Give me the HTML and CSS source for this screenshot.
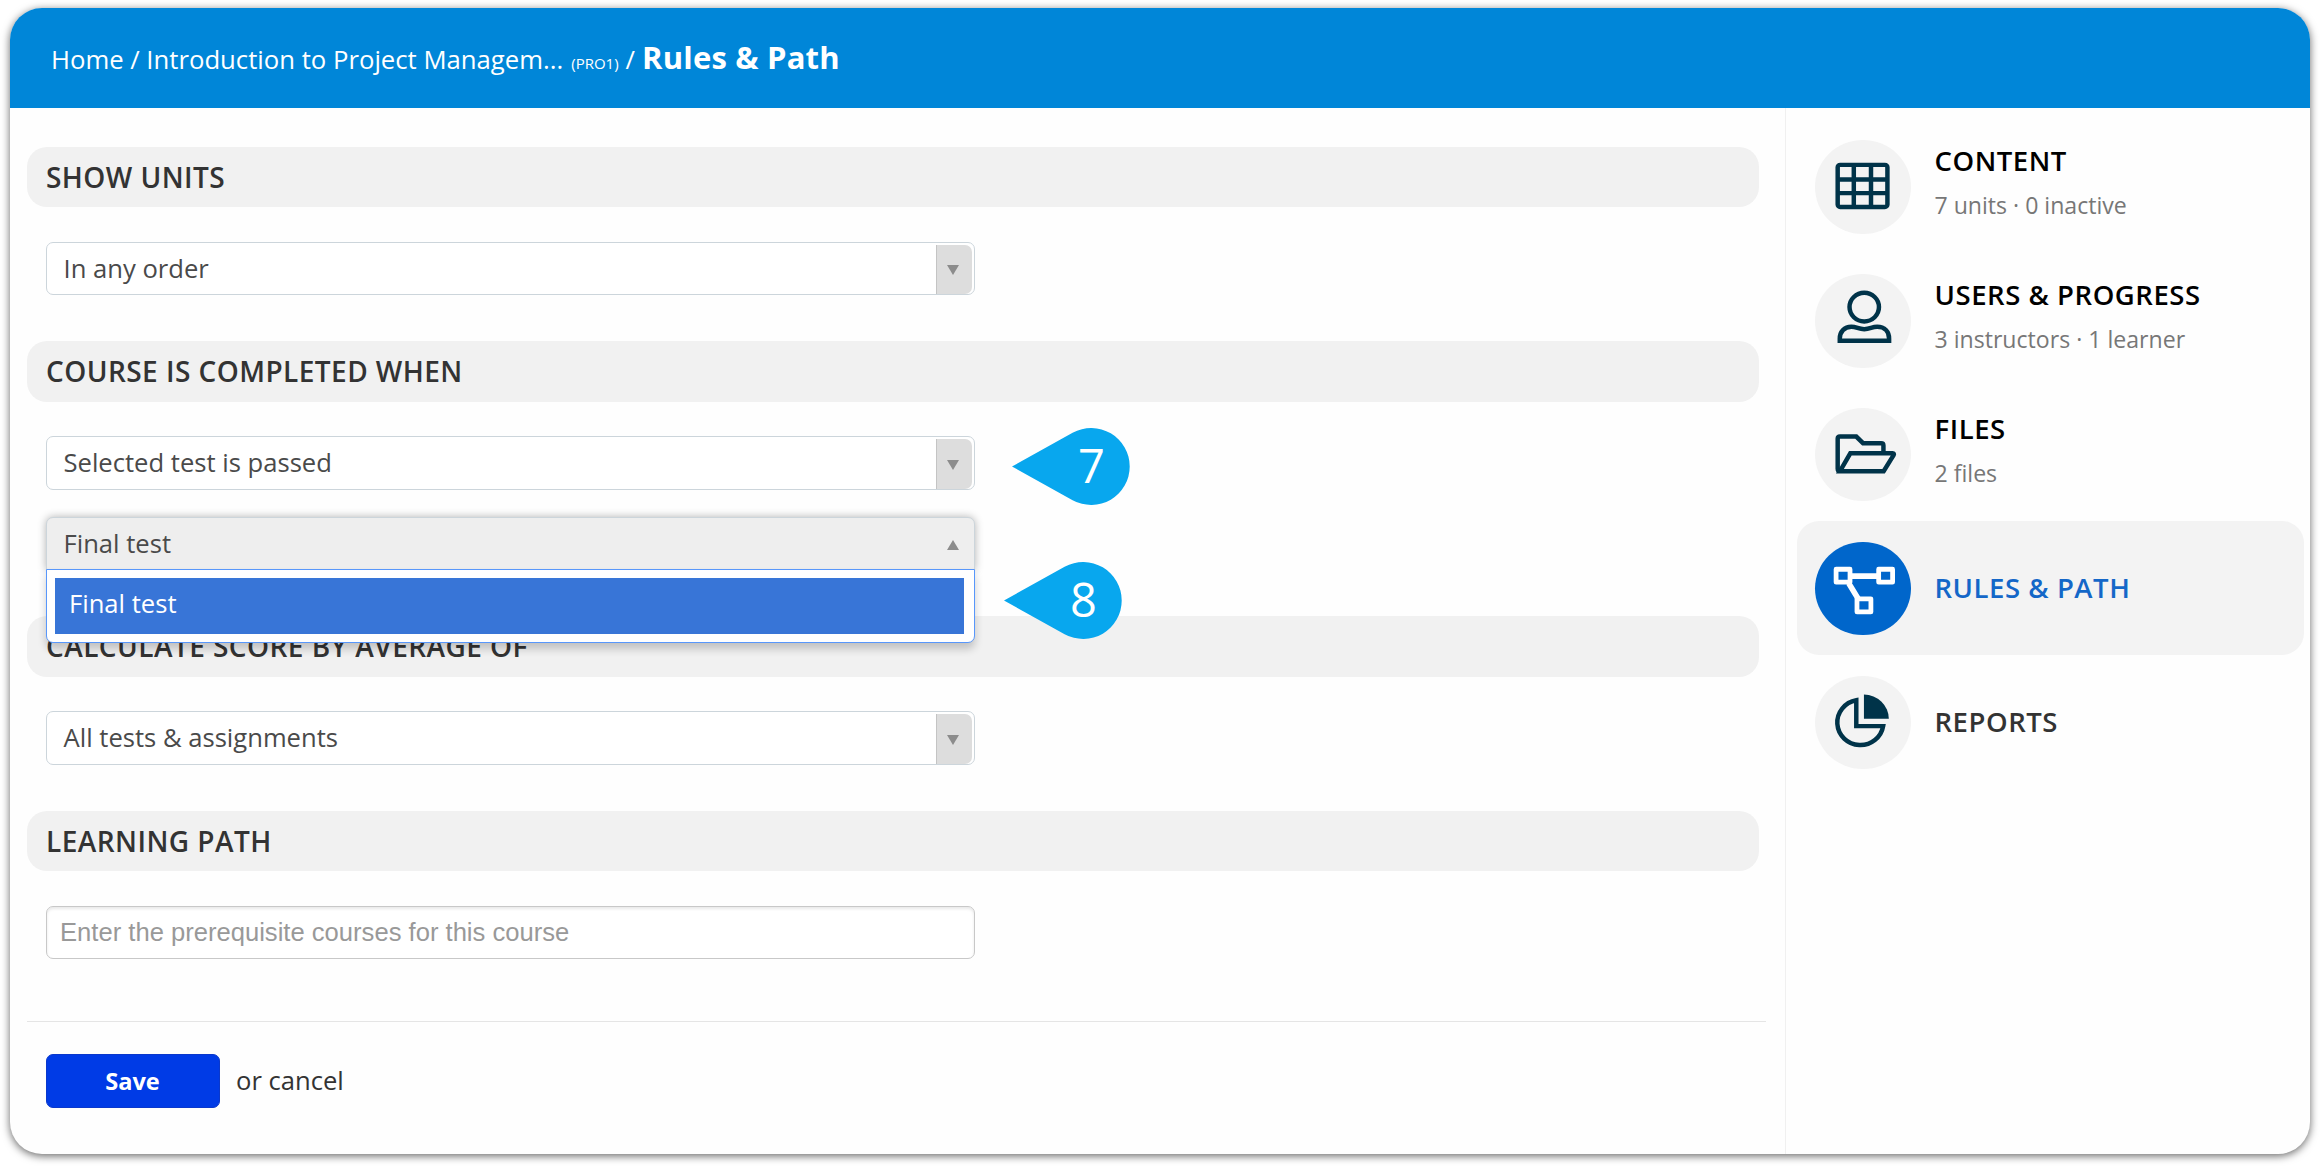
FILE: index.html
```html
<!DOCTYPE html>
<html lang="en">
<head>
    <meta charset="UTF-8">
    <meta name="viewport" content="width=device-width, initial-scale=1.0">
    <title>Rules &amp; Path</title>
    <link rel="stylesheet" href="styles.css">
</head>
<body>
    <div class="window">
        <!-- Breadcrumb -->
        <header class="topbar">
            <a class="crumb crumb-course">Home / Introduction to Project Managem...</a>
            <span class="code">(PRO1)</span>
            <span class="crumb">/</span>
            <strong class="current">Rules &amp; Path</strong>
        </header>

        <div class="main">
            <form class="rules">
                <section class="group">
                    <h2>SHOW UNITS</h2>
                    <div class="fields">
                        <div class="select"><span>In any order</span><i class="toggle"></i></div>
                    </div>
                </section>

                <section class="group">
                    <h2>COURSE IS COMPLETED WHEN</h2>
                    <div class="fields">
                        <div class="select">
                            <span>Selected test is passed</span><i class="toggle"></i>
                            <div class="marker marker-7">
                                <svg width="118" height="77" viewBox="0 0 118 77"><path d="M0 38.5 L60.6 4.8 A38.5 38.5 0 1 1 60.6 72.2 Z" fill="#08a7ee"/></svg>
                                <b>7</b>
                            </div>
                        </div>
                        <div class="select open">
                            <span>Final test</span><i class="toggle"></i>
                            <ul class="dropdown">
                                <li>Final test</li>
                            </ul>
                            <div class="marker marker-8">
                                <svg width="118" height="77" viewBox="0 0 118 77"><path d="M0 38.5 L60.6 4.8 A38.5 38.5 0 1 1 60.6 72.2 Z" fill="#08a7ee"/></svg>
                                <b>8</b>
                            </div>
                        </div>
                    </div>
                </section>

                <section class="group">
                    <h2>CALCULATE SCORE BY AVERAGE OF</h2>
                    <div class="fields">
                        <div class="select"><span>All tests &amp; assignments</span><i class="toggle"></i></div>
                    </div>
                </section>

                <section class="group">
                    <h2>LEARNING PATH</h2>
                    <div class="fields">
                        <input type="text" class="text-input" placeholder="Enter the prerequisite courses for this course">
                    </div>
                </section>

                <div class="actions">
                    <button type="button" class="save">Save</button>
                    <span class="cancel">or cancel</span>
                </div>
            </form>

            <!-- Course menu -->
            <nav class="sidebar">
                <a class="item">
                    <svg class="icon" viewBox="0 0 96 94">
                        <rect x="22.8" y="25" width="50" height="42.3" rx="2.5"/>
                        <path d="M39 25V67M56.3 25V67M22.5 39.7H72.5M22.5 53.4H72.5"/>
                    </svg>
                    <div class="label"><h3>CONTENT</h3><p>7 units · 0 inactive</p></div>
                </a>
                <a class="item">
                    <svg class="icon" viewBox="0 0 96 94">
                        <ellipse cx="49.5" cy="33.3" rx="14.8" ry="14.4"/>
                        <path d="M24.9 67V65C24.9 58 29.5 53.1 36.5 53.1C42 53.1 43.5 55.5 49.5 55.5S57 53.1 62.5 53.1C70 53.1 74.5 58 74.5 65V67Z"/>
                    </svg>
                    <div class="label"><h3>USERS &amp; PROGRESS</h3><p>3 instructors · 1 learner</p></div>
                </a>
                <a class="item">
                    <svg class="icon" viewBox="0 0 96 94">
                        <path d="M23.5 63.5Q22.8 63 22.8 61V31Q22.8 28.7 25.1 28.7H41.5L48.3 35.4H66.5Q68.8 35.4 68.8 37.6V45.5"/>
                        <path d="M25 63.6L35.5 45.6H78Q80 45.6 79 47.5L69 63.6Z"/>
                    </svg>
                    <div class="label"><h3>FILES</h3><p>2 files</p></div>
                </a>
                <a class="item active">
                    <svg class="icon" viewBox="0 0 96 94">
                        <g stroke-width="4.8" stroke-linejoin="round">
                            <rect x="21.2" y="27.4" width="14" height="13"/>
                            <rect x="64" y="27.4" width="14" height="13"/>
                            <rect x="42.2" y="57.1" width="14" height="13.2"/>
                        </g>
                        <path d="M36.4 34.3H62.4M33.9 41.5L43.4 57" stroke-width="5.6"/>
                    </svg>
                    <div class="label single"><h3>RULES &amp; PATH</h3></div>
                </a>
                <a class="item reports">
                    <svg class="icon" viewBox="0 0 96 94">
                        <path d="M41.5 24.4V50.4H68.5A23.2 22.7 0 1 1 41.5 24.4Z"/>
                        <path class="solid" d="M49.2 18.7A25 24.3 0 0 1 74.2 43H49.2Z"/>
                    </svg>
                    <div class="label single"><h3>REPORTS</h3></div>
                </a>
            </nav>
        </div>
    </div>
</body>
</html>
```
FILE: styles.css
```css
* {
    box-sizing: border-box;
}
body {
    margin: 0;
    padding: 8px 10px 12px;
    height: 1166px;
    background-color: #fff;
    font-family: "Open Sans", sans-serif;
    color: #333;
}
.window {
    height: 1146px;
    display: flex;
    flex-direction: column;
    background-color: #fefefe;
    border-radius: 32px;
    overflow: hidden;
    box-shadow: 0 2px 9px rgba(0, 0, 0, 0.6);
}
.topbar {
    height: 100px;
    flex-shrink: 0;
    display: flex;
    align-items: baseline;
    padding: 31px 42px 0 41px;
    background-color: #0086d8;
    color: #fff;
    line-height: 36px;
    white-space: nowrap;
}
.crumb {
    font-size: 25.7px;
}
.code {
    margin: 0 7px 0 8px;
    font-size: 15px;
}
.current {
    margin-left: 7px;
    font-size: 31px;
    letter-spacing: 0.2px;
}
.main {
    flex: 1;
    display: flex;
}
.rules {
    flex: 1;
    padding: 38.6px 19px 0 17px;
}
.group {
    margin: 0 7px 46px 0;
}
.group h2 {
    height: 60.5px;
    margin: 0;
    padding-left: 19px;
    border-radius: 20px;
    background-color: #f1f1f1;
    font-size: 28px;
    font-weight: 600;
    letter-spacing: 0.45px;
    line-height: 60px;
}
.fields {
    width: 948px;
    padding: 34.5px 0 0 19px;
    display: flex;
    flex-direction: column;
    gap: 27px;
}
.select {
    position: relative;
    height: 53.5px;
    display: flex;
    justify-content: space-between;
    padding: 2px 2px 0 16.5px;
    border: 1.5px solid #ccd5db;
    border-radius: 7px;
    background-color: #fff;
    color: #4a4a4a;
    font-size: 25.6px;
    line-height: 47px;
}
.toggle {
    width: 36px;
    display: flex;
    align-items: center;
    justify-content: center;
    padding: 2px 3px 0 0;
    border-left: 1px solid #c4c4c4;
    border-radius: 0 7px 7px 0;
    background-color: #ddd;
}
.toggle::before {
    content: "";
    border: 6px solid transparent;
    border-top: 10px solid #8c8c8c;
    border-bottom: 0;
}
.open {
    border-radius: 7px 7px 0 0;
    background-color: #eee;
    box-shadow: 0 0 9px rgba(0, 0, 0, 0.3);
}
.open .toggle {
    border-color: transparent;
    background: none;
}
.open .toggle::before {
    border: 6px solid transparent;
    border-bottom: 10px solid #8c8c8c;
    border-top: 0;
}
.dropdown {
    position: absolute;
    z-index: 1;
    top: 51px;
    left: -1px;
    right: -1px;
    height: 74px;
    margin: 0;
    padding: 8px 10px 8px 8px;
    list-style: none;
    background-color: #fff;
    border: 1.5px solid #5897fb;
    border-radius: 0 0 7px 7px;
    box-shadow: 0 6px 9px rgba(0, 0, 0, 0.2);
}
.dropdown li {
    height: 56px;
    padding-left: 14px;
    background-color: #3875d7;
    color: #fff;
    line-height: 52px;
}
/* Step markers pointing at the fields */
.marker {
    position: absolute;
    z-index: 2;
    width: 118px;
    height: 77px;
}
.marker svg {
    display: block;
}
.marker b {
    position: absolute;
    top: 0;
    left: 60px;
    width: 39px;
    color: #fff;
    font-size: 47px;
    font-weight: 400;
    line-height: 75px;
    text-align: center;
}
.marker-7 {
    left: 965px;
    top: -9px;
}
.marker-8 {
    left: 957px;
    top: 44px;
}
.text-input {
    height: 53.5px;
    padding: 0 13px;
    border: 1.5px solid #c8c8c8;
    border-radius: 7px;
    background-color: #fff;
    box-shadow: inset 0 2px 3px rgba(0, 0, 0, 0.09);
    font-family: "Liberation Sans", Arial, sans-serif;
    font-size: 25.6px;
}
.text-input::placeholder {
    color: #999;
}
.actions {
    display: flex;
    align-items: center;
    margin-top: 62px;
    padding: 32px 0 0 19px;
    border-top: 1.5px solid #e5e5e5;
}
.save {
    width: 174px;
    height: 54px;
    padding: 0 1px 1px 0;
    border: 1px solid #0a38cc;
    border-radius: 7px;
    background-color: #003be6;
    color: #fff;
    font-family: inherit;
    font-size: 23.6px;
    font-weight: 700;
}
.cancel {
    margin-left: 16px;
    padding-bottom: 2px;
    font-size: 25.6px;
}
.sidebar {
    width: 525px;
    padding: 11px 6px 0 11px;
    border-left: 1.5px solid #f0f0f0;
}
.item {
    height: 133.9px;
    display: flex;
    align-items: center;
    padding: 2px 0 0 18px;
    border-radius: 22px;
}
.icon {
    width: 95.5px;
    height: 93.5px;
    flex-shrink: 0;
    border-radius: 50%;
    background-color: #f3f3f3;
    fill: none;
    stroke: #003349;
    stroke-width: 4.5;
}
.solid {
    fill: #003349;
    stroke: none;
}
.label {
    padding: 0 0 8px 24px;
    white-space: nowrap;
}
.single {
    padding-bottom: 2px;
}
.label h3 {
    margin: 0;
    color: #000;
    font-size: 27.5px;
    font-weight: 550;
    letter-spacing: 0.55px;
    line-height: 46px;
}
.label p {
    margin: 0;
    color: #777;
    font-size: 23.1px;
    line-height: 43px;
}
.active {
    background-color: #f3f3f3;
}
.active .icon {
    background-color: #0066cb;
    stroke: #fff;
}
.active h3 {
    color: #1467c8;
}
.reports h3 {
    color: #333;
}
```
